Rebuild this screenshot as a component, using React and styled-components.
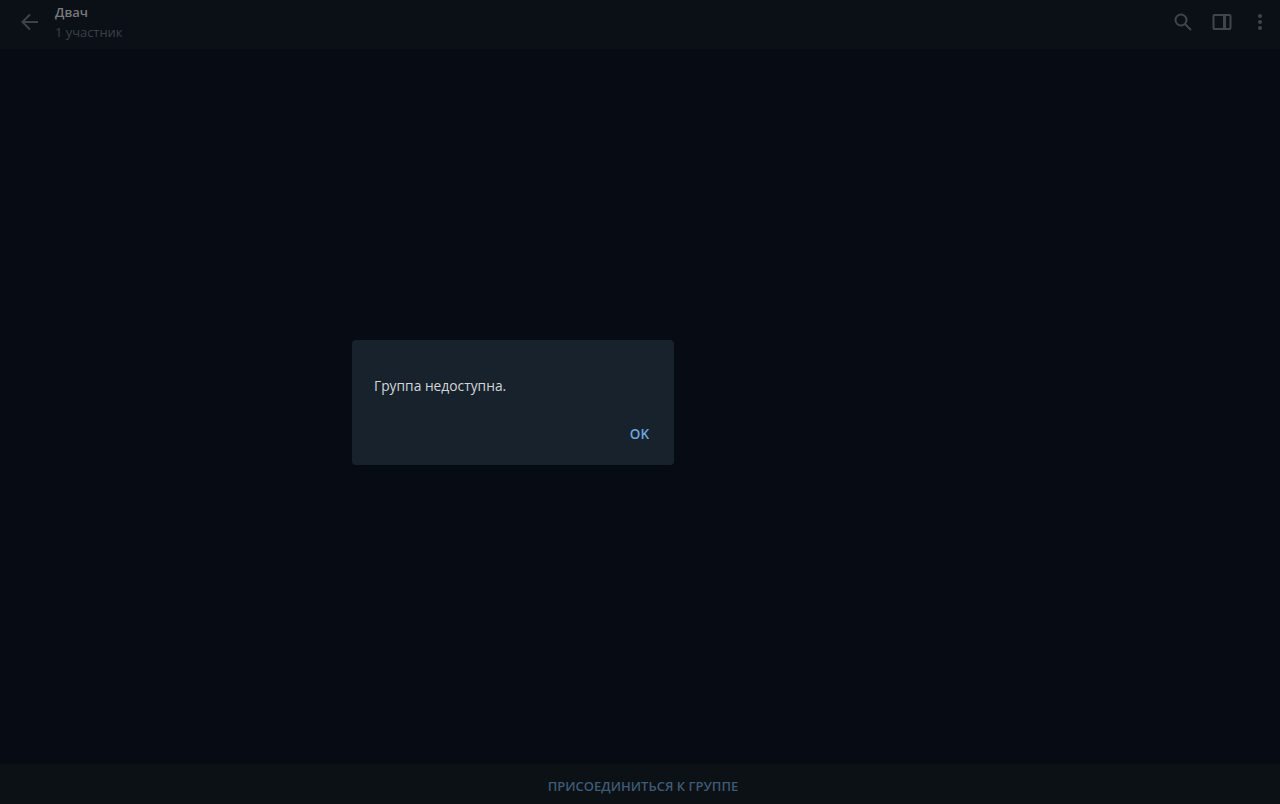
import React from "react";
import styled, { createGlobalStyle } from "styled-components";

const GlobalStyle = createGlobalStyle`
  html, body {
    margin: 0;
    padding: 0;
    height: 100%;
    background: #070b13;
    font-family: "Open Sans", "Liberation Sans", sans-serif;
  }
  #root {
    height: 100%;
  }
`;

const Page = styled.div`
  display: flex;
  flex-direction: column;
  width: 1280px;
  height: 804px;
  overflow: hidden;
  background: #070b13;
`;

const Header = styled.header`
  display: flex;
  align-items: flex-start;
  height: 50px;
  flex-shrink: 0;
  background: #0b1016;
  border-bottom: 1px solid #070b12;
  padding: 0 18px 0 20px;
  box-sizing: border-box;
`;

const BackButton = styled.div`
  display: flex;
  width: 20px;
  height: 20px;
  margin-right: 15px;
  margin-top: 12px;
  color: #3d4248;
`;

const Titles = styled.div`
  display: flex;
  flex-direction: column;
  flex: 1;
  gap: 2px;
  padding-top: 3px;
`;

const Title = styled.div`
  font-size: 13px;
  font-weight: 600;
  line-height: 18px;
  color: #777a7d;
`;

const Subtitle = styled.div`
  font-size: 12.9px;
  line-height: 18px;
  color: #3a4046;
`;

const Actions = styled.div`
  display: flex;
  align-items: center;
  gap: 19px;
  margin-top: 12px;
  color: #41454b;
`;

const IconSlot = styled.div`
  display: flex;
  width: ${(p) => p.$width}px;
  height: 20px;
  justify-content: center;
  align-items: center;
  margin-left: ${(p) => p.$shift || 0}px;
`;

const Main = styled.main`
  flex: 1;
  display: flex;
  align-items: flex-start;
  padding: 290px 0 0 352px;
  box-sizing: border-box;
`;

const Dialog = styled.div`
  display: flex;
  flex-direction: column;
  width: 322px;
  height: 125px;
  box-sizing: border-box;
  padding: 36px 16px 0 22px;
  background: #18222d;
  border-radius: 4px;
`;

const Message = styled.div`
  font-size: 13.8px;
  line-height: 19px;
  color: #d3d5d7;
`;

const DialogActions = styled.div`
  display: flex;
  justify-content: flex-end;
  margin-top: 30px;
`;

const OkButton = styled.div`
  font-size: 13.5px;
  font-weight: 600;
  line-height: 19px;
  padding: 0 9px 0 0;
  color: #6ba6dc;
`;

const Footer = styled.footer`
  display: flex;
  align-items: center;
  justify-content: center;
  height: 40px;
  flex-shrink: 0;
  padding: 4px 0 0 6px;
  box-sizing: border-box;
  background: #0b1115;
`;

const JoinButton = styled.div`
  font-size: 13px;
  font-weight: 600;
  line-height: 19px;
  color: #3e5a75;
`;

export default function App() {
  return (
    <Page>
      <GlobalStyle />
      <Header>
        <BackButton>
          <svg width="20" height="20" viewBox="0 0 20 20" fill="none" stroke="currentColor" strokeWidth="2">
            <path d="M18 10H3M10 2.5 2.5 10l7.5 7.5" />
          </svg>
        </BackButton>
        <Titles>
          <Title>Двач</Title>
          <Subtitle>1 участник</Subtitle>
        </Titles>
        <Actions>
          <IconSlot $width={20}>
            <svg width="20" height="20" viewBox="0 0 20 20" fill="none" stroke="currentColor" strokeWidth="2">
              <circle cx="8" cy="8" r="5.5" />
              <path d="m12 12 6 6" />
            </svg>
          </IconSlot>
          <IconSlot $width={20}>
            <svg width="20" height="18" viewBox="0 0 20 18" fill="none" stroke="currentColor" strokeWidth="2">
              <rect x="1.5" y="2" width="17" height="14" rx="1" />
              <path d="M12.5 2v14" strokeWidth="3" />
            </svg>
          </IconSlot>
          <IconSlot $width={4} $shift={7}>
            <svg width="4" height="18" viewBox="0 0 4 18" fill="currentColor">
              <circle cx="2" cy="3" r="2" />
              <circle cx="2" cy="9" r="2" />
              <circle cx="2" cy="15" r="2" />
            </svg>
          </IconSlot>
        </Actions>
      </Header>
      <Main>
        <Dialog>
          <Message>Группа недоступна.</Message>
          <DialogActions>
            <OkButton>OK</OkButton>
          </DialogActions>
        </Dialog>
      </Main>
      <Footer>
        <JoinButton>ПРИСОЕДИНИТЬСЯ К ГРУППЕ</JoinButton>
      </Footer>
    </Page>
  );
}
